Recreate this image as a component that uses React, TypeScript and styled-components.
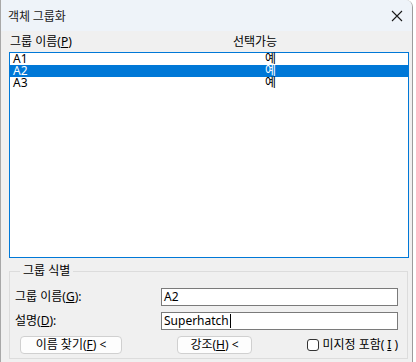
import styled, { createGlobalStyle } from "styled-components";

const GlobalStyle = createGlobalStyle`
  html, body {
    margin: 0;
    padding: 0;
    background: #ffffff;
  }
  body {
    font-family: "Noto Sans", "Noto Sans CJK KR", sans-serif;
    font-size: 12px;
    color: #000;
  }
`;

const rows = [
  { name: "A1", selectable: "예" },
  { name: "A2", selectable: "예" },
  { name: "A3", selectable: "예" },
];

const App = () => {
  return (
    <>
      <GlobalStyle />
      <Window>
        <TitleBar>
          <Title>객체 그룹화</Title>
          <CloseIcon width="12" height="12" viewBox="0 0 12 12">
            <path d="M1 1 L11 11 M11 1 L1 11" stroke="#1a1a1a" strokeWidth="1.1" fill="none" />
          </CloseIcon>
        </TitleBar>
        <Body>
          <Header>
            <HeadCell>
              그룹 이름(<u>P</u>)
            </HeadCell>
            <HeadCell>선택가능</HeadCell>
          </Header>
          <ListBox>
            {rows.map((r) => (
              <ListRow key={r.name} selected={r.name === "A2"}>
                <NameCell>{r.name}</NameCell>
                <ValueCell>{r.selectable}</ValueCell>
              </ListRow>
            ))}
          </ListBox>
          <GroupBox>
            <Legend>그룹 식별</Legend>
            <FormGrid>
              <Label>
                그룹 이름(<u>G</u>):
              </Label>
              <TextBox>A2</TextBox>
              <Label>
                설명(<u>D</u>):
              </Label>
              <TextBox>
                Superhatch
                <Caret />
              </TextBox>
            </FormGrid>
            <ButtonRow>
              <Button w={102}>
                이름 찾기(<u>F</u>) &lt;
              </Button>
              <Button w={75}>
                강조(<u>H</u>) &lt;
              </Button>
              <CheckLabel>
                <CheckBox />
                미지정 포함(<u>I</u>)
              </CheckLabel>
            </ButtonRow>
          </GroupBox>
        </Body>
      </Window>
    </>
  );
};

export default App;

const Window = styled.div`
  width: 413px;
  height: 362px;
  box-sizing: border-box;
  border-left: 1px solid #a8a8a8;
  border-right: 1px solid #9c9c9c;
  border-top-right-radius: 7px;
  background: #f0f0f0;
  overflow: hidden;
  display: flex;
  flex-direction: column;
`;

const TitleBar = styled.div`
  height: 31px;
  flex: none;
  background: #eef3f9;
  display: flex;
  align-items: center;
  justify-content: space-between;
  padding: 0 6px 0 7px;
`;

const Title = styled.span`
  font-family: "Noto Sans CJK KR", sans-serif;
  font-size: 12px;
  line-height: 16px;
  color: #1a1a1a;
`;

const CloseIcon = styled.svg`
  display: block;
  margin-right: 3px;
  margin-top: 1px;
`;

const Body = styled.div`
  display: flex;
  flex-direction: column;
  padding: 0 3px 0 8px;
`;

const Header = styled.div`
  height: 21px;
  display: grid;
  grid-template-columns: 223px 1fr;
  padding-left: 1px;
  align-items: center;
`;

const HeadCell = styled.span`
  line-height: 16px;
  padding-top: 1px;
`;

const ListBox = styled.div`
  height: 206px;
  box-sizing: border-box;
  border: 1px solid #0078d7;
  background: #ffffff;
  display: flex;
  flex-direction: column;
`;

const ListRow = styled.div<{ selected?: boolean }>`
  height: 12px;
  display: grid;
  grid-template-columns: 252px 1fr;
  padding-left: 3px;
  line-height: 12px;
  background: ${(p) => (p.selected ? "#0078d7" : "transparent")};
  color: ${(p) => (p.selected ? "#ffffff" : "#000000")};
`;

const NameCell = styled.span``;

const ValueCell = styled.span``;

const GroupBox = styled.fieldset`
  margin: 5px 1px 0 0;
  padding: 0 9px 4px 5px;
  border: 1px solid #dcdcdc;
  min-width: 0;
`;

const Legend = styled.legend`
  padding: 0 3px;
  margin-left: 5px;
  line-height: 16px;
`;

const FormGrid = styled.div`
  display: grid;
  grid-template-columns: 146px 1fr;
  row-gap: 6px;
  align-items: center;
  margin-top: 9px;
`;

const Label = styled.span`
  line-height: 16px;
`;

const TextBox = styled.div`
  height: 18px;
  box-sizing: border-box;
  border: 1px solid #7a7a7a;
  background: #ffffff;
  padding-left: 2px;
  line-height: 16px;
  display: flex;
  align-items: center;
`;

const Caret = styled.span`
  display: inline-block;
  width: 1px;
  height: 14px;
  background: #000;
  margin-left: 1px;
`;

const ButtonRow = styled.div`
  display: flex;
  align-items: center;
  margin-top: 6px;
  padding-left: 5px;
`;

const Button = styled.div<{ w: number }>`
  width: ${(p) => p.w}px;
  height: 18px;
  box-sizing: border-box;
  border: 1px solid #d0d0d0;
  border-radius: 4px;
  background: #fdfdfd;
  display: flex;
  align-items: center;
  justify-content: center;
  line-height: 16px;
  margin-right: 55px;
`;

const CheckLabel = styled.label`
  margin-left: auto;
  display: flex;
  align-items: center;
  gap: 3px;
  line-height: 16px;
`;

const CheckBox = styled.span`
  width: 12px;
  height: 12px;
  box-sizing: border-box;
  border: 1px solid #333333;
  border-radius: 3px;
  background: #ffffff;
`;
